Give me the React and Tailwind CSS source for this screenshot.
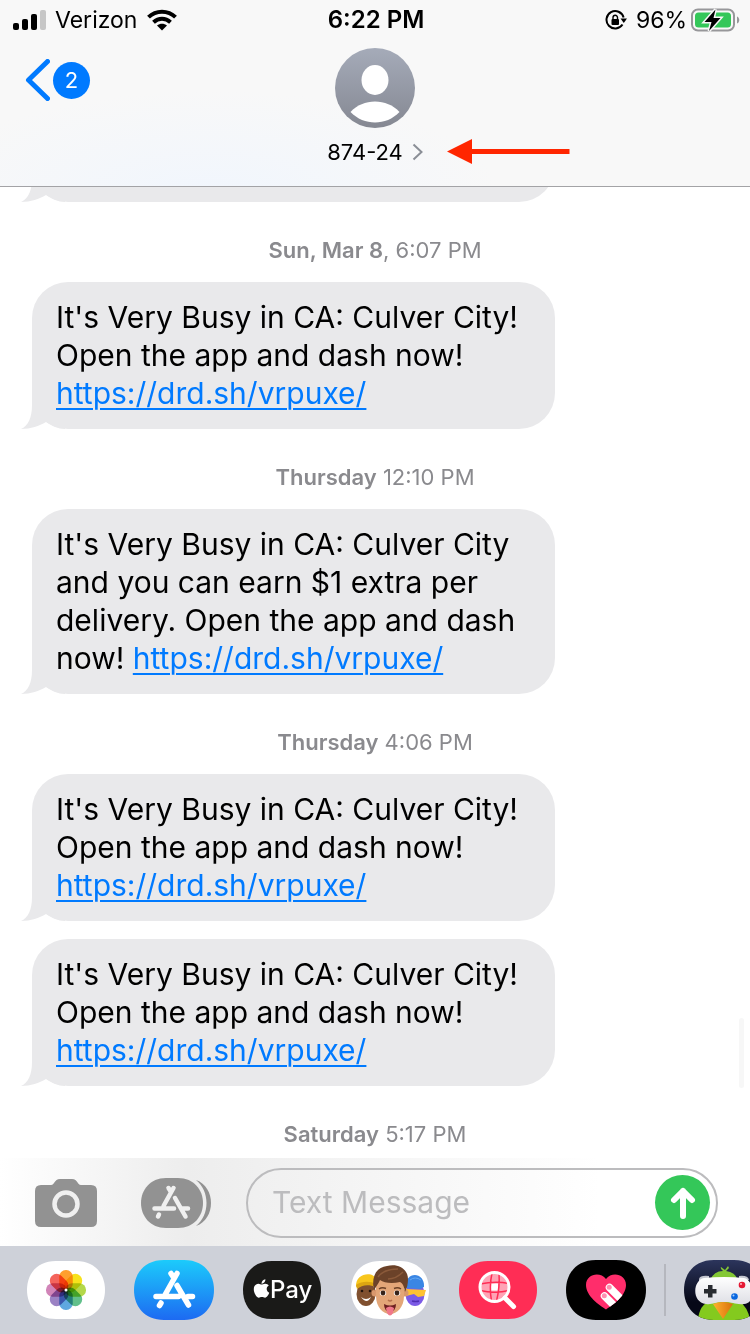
import { FaApple } from 'react-icons/fa';

const LINK = 'https://drd.sh/vrpuxe/';
const BUSY = "It's Very Busy in CA: Culver City! Open the app and dash now!";
const EXTRA =
  "It's Very Busy in CA: Culver City and you can earn $1 extra per delivery. Open the app and dash now!";

const thread = [
  { day: 'Sun, Mar 8', sep: ',', time: '6:07 PM', messages: [BUSY] },
  { day: 'Thursday', time: '12:10 PM', messages: [EXTRA] },
  { day: 'Thursday', time: '4:06 PM', messages: [BUSY, BUSY] },
];

const PILL = 'M30 0H50C70 0 80 14 80 30S70 60 50 60H30C10 60 0 46 0 30S10 0 30 0Z';
const PILL_INSET = 'M30 1H50C69 1 79 14 79 30S69 59 50 59H30C11 59 1 46 1 30S11 1 30 1Z';

function StatusBar() {
  return (
    <div className="grid h-10 grid-cols-3 items-center pl-3 pr-[10px] text-[23px]">
      <div className="flex items-center">
        <svg width="34" height="22" viewBox="0 0 34 22" aria-hidden="true">
          <rect x="1" y="14" width="6" height="7" rx="2" />
          <rect x="10" y="10" width="6" height="11" rx="2" />
          <rect x="19" y="5" width="6" height="16" rx="2" />
          <rect x="28" y="1" width="6" height="20" rx="2" fill="#c6c6c6" />
        </svg>
        <span className="mx-[9px]">Verizon</span>
        <svg width="32" height="24" viewBox="0 0 32 24" fill="none" stroke="#000" strokeWidth="4" aria-hidden="true">
          <path d="M2.500 9.200C10 1.800 22 1.800 29.500 9.200" />
          <path d="M7.500 14.300C12.500 9.700 19.500 9.700 24.500 14.300" />
          <path d="M11 17.500C14 15 18 15 21 17.500L16 22.500Z" fill="#000" stroke="none" />
        </svg>
      </div>
      <div className="text-center text-2xl font-semibold">6:22 PM</div>
      <div className="flex items-center justify-end">
        <svg width="22" height="22" viewBox="0 0 22 22" fill="none" aria-hidden="true">
          <path d="M17.500 15.500A8.700 8.700 0 1 1 18.600 8.500" stroke="#000" strokeWidth="2" />
          <path d="M15.500 9.500H22L18.800 14Z" fill="#000" />
          <rect x="6.500" y="10" width="7.500" height="6" rx="1" fill="#000" />
          <path d="M8 10.500V8.500A2.200 2.200 0 0 1 12.500 8.500V10.500" stroke="#000" strokeWidth="1.400" />
        </svg>
        <span className="ml-[9px] mr-1">96%</span>
        <svg width="49" height="24" viewBox="0 0 49 24" aria-hidden="true">
          <rect x="1" y="1.500" width="42" height="21" rx="6" fill="none" stroke="#97979a" strokeWidth="2" />
          <rect x="4" y="4.500" width="36" height="15" rx="3.500" fill="#34c759" />
          <path d="M46 8.500C49 9.500 49 14.500 46 15.500Z" fill="#97979a" />
          <path d="M24.500 1.500L13.500 14H20.500L18 23L29.500 10H22.500Z" stroke="#f8f8f8" strokeWidth="3" />
          <path d="M24.500 1.500L13.500 14H20.500L18 23L29.500 10H22.500Z" />
        </svg>
      </div>
    </div>
  );
}

function Header() {
  return (
    <header className="shrink-0 border-b border-[#a3a3a6] bg-[#f8f8f8] bg-[radial-gradient(ellipse_at_28%_105%,#f1f6fd_0%,#f8f8f8_38%)]">
      <StatusBar />
      <div className="grid grid-cols-3 items-start px-6 pb-5 pt-2">
        <button type="button" aria-label="Back" className="mt-3 flex h-10 items-center gap-[3px] justify-self-start">
          <svg width="26" height="42" viewBox="0 0 26 42" fill="none" aria-hidden="true">
            <path d="M23.500 2.500L4.500 21L23.500 39.500" stroke="#007aff" strokeWidth="5" strokeLinecap="round" strokeLinejoin="round" />
          </svg>
          <span className="flex size-[37px] items-center justify-center rounded-full bg-[#007aff] text-[22px] text-white">2</span>
        </button>
        <div className="flex flex-col items-center">
          <svg width="80" height="80" viewBox="0 0 80 80" aria-hidden="true">
            <defs>
              <linearGradient id="avatar" x2="0" y2="1">
                <stop stopColor="#a5abb9" />
                <stop offset="1" stopColor="#858892" />
              </linearGradient>
            </defs>
            <circle cx="40" cy="40" r="40" fill="url(#avatar)" />
            <ellipse cx="40" cy="32" rx="13.500" ry="15" fill="#fff" />
            <path d="M15.500 64C28 50 52 50 64.500 64C51 78 29 78 15.500 64Z" fill="#fff" />
          </svg>
          <div className="relative mt-[10px]">
            <button type="button" className="flex items-center gap-[9px] text-[22px] leading-7">
              874-24
              <svg width="11" height="18" viewBox="0 0 11 18" fill="none" aria-hidden="true">
                <path d="M1.500 1.500L9.500 9L1.500 16.500" stroke="#8a8e96" strokeWidth="2" />
              </svg>
            </button>
            <svg className="absolute left-full top-0 ml-6" width="123" height="28" viewBox="0 0 123 28" aria-hidden="true">
              <path d="M0 13.500L25 1V11H122.500V16H25V26Z" fill="#ff2600" />
            </svg>
          </div>
        </div>
      </div>
    </header>
  );
}

function Bubble({ text }) {
  return (
    <div className="relative w-[523px] max-w-full rounded-[36px] bg-[#e9e9eb] px-6 pb-[17px] pt-4 text-[30px] leading-[38px]">
      <svg className="absolute -left-[11px] bottom-0" width="44" height="36" viewBox="0 0 44 36" aria-hidden="true">
        <path d="M11 0V12C11 25 7 33 0 36C10 36 18 33 25 29C31 33 37 36 44 36V0Z" fill="#e9e9eb" />
      </svg>
      {text ? (
        <p className="relative">
          {text}{' '}
          <a href={LINK} className="text-[#007aff] underline decoration-2 underline-offset-4">{LINK}</a>
        </p>
      ) : (
        <div className="h-20" />
      )}
    </div>
  );
}

function Stamp({ day, sep, time }) {
  return (
    <div className="h-20 pt-[34px] text-center text-[22px] leading-7 text-[#8a8a8e]">
      <span className="font-semibold">{day}</span>
      {sep} {time}
    </div>
  );
}

function Composer() {
  return (
    <form
      onSubmit={(e) => e.preventDefault()}
      className="flex h-[88px] items-center bg-linear-to-r from-white via-[#ededed] via-25% to-white to-80% pl-[35px] pr-8 pt-px"
    >
      <button type="button" aria-label="Camera">
        <svg width="62" height="48" viewBox="0 0 62 48" aria-hidden="true">
          <path d="M6 6H16C20 6 19 0 25 0H37C43 0 42 6 46 6H56Q62 6 62 12V42Q62 48 56 48H6Q0 48 0 42V12Q0 6 6 6Z" fill="#929292" />
          <circle cx="31" cy="25" r="11.500" fill="none" stroke="#f0f0f0" strokeWidth="4.500" />
        </svg>
      </button>
      <button type="button" aria-label="Apps" className="ml-11">
        <svg width="70" height="50" viewBox="0 0 70 50" fill="none" aria-hidden="true">
          <path d="M25 0H37C53 0 62 12 62 25S53 50 37 50H25C9 50 0 38 0 25S9 0 25 0Z" fill="#929292" />
          <path d="M55 2C75 9 75 41 55 48C69 37 69 13 55 2Z" fill="#929292" />
          <path
            d="M32.500 10L22.500 28M27.500 10L30 14M34 20L44.500 38.500M13.500 30.500H33M41 30.500H47M18 36.500L17 38.500"
            stroke="#f0f0f0"
            strokeWidth="4.500"
            strokeLinecap="round"
          />
        </svg>
      </button>
      <div className="ml-[35px] flex h-[70px] min-w-0 flex-1 items-center rounded-full border-2 border-[#bcbcbe] pl-6 pr-[6px]">
        <input
          type="text"
          aria-label="Text Message"
          placeholder="Text Message"
          className="min-w-0 flex-1 bg-transparent text-[30px] outline-none placeholder:text-[#bcbcbe]"
        />
        <button type="submit" aria-label="Send" className="flex size-[55px] items-center justify-center rounded-full bg-[#34c759]">
          <svg width="28" height="34" viewBox="0 0 28 34" fill="none" stroke="#fff" strokeWidth="6" strokeLinecap="round" strokeLinejoin="round" aria-hidden="true">
            <path d="M14 30V5M5 14L14 5L23 14" />
          </svg>
        </button>
      </div>
    </form>
  );
}

function AppButton({ label, fill, shape = PILL, children }) {
  return (
    <button type="button" aria-label={label} className="shrink-0">
      <svg width="80" height="60" viewBox="0 0 80 60" aria-hidden="true">
        <path d={shape} fill={fill} />
        {children}
      </svg>
    </button>
  );
}

const petals = ['#ff9f2e', '#f7e21c', '#b4d84a', '#62c08b', '#5fa8e0', '#9b82c4', '#d184b8', '#f4645c'];

function AppStrip() {
  return (
    <nav className="flex h-[88px] items-center overflow-hidden bg-[#ced1d9] pl-[26px]">
      <div className="flex shrink-0 gap-7">
        <AppButton label="Photos" fill="#fff" shape={PILL_INSET}>
          {petals.map((color, i) => (
            <rect key={color} className="mix-blend-multiply" x="33.250" y="10" width="13.500" height="20.500" rx="6.500" fill={color} transform={`rotate(${i * 45} 40 30)`} />
          ))}
          <circle cx="40" cy="30" r="1.500" fill="#fff" />
        </AppButton>

        <AppButton label="App Store" fill="url(#store)">
          <defs>
            <linearGradient id="store" x2="0" y2="1">
              <stop stopColor="#1ccbfb" />
              <stop offset="1" stopColor="#1d6af2" />
            </linearGradient>
          </defs>
          <path
            d="M43 13.500L31.500 34M37 13.500L40 18M43 25.500L54.500 45M22 36.500H44.500M54 36.500H58.500M27 43L25.500 45.500"
            stroke="#fff"
            strokeWidth="5.500"
            strokeLinecap="round"
          />
        </AppButton>

        <AppButton label="Apple Pay" fill="#1a1a18" shape={PILL_INSET}>
          <FaApple x="9" y="18" size={21} color="#fff" />
          <text x="28" y="38" fontSize="24" fontWeight="500" fill="#fff">Pay</text>
        </AppButton>

        <AppButton label="Memoji" fill="#fff" shape={PILL_INSET}>
          {/* left: yellow beanie */}
          <ellipse cx="16" cy="34" rx="9.500" ry="12" fill="#80502f" />
          <path d="M6 27C5 12 25 11 26 20V26C17 23 11 24 6 27Z" fill="#f8c61d" />
          <path d="M6 25C12 21 20 21 26 24V27C18 24 12 25 7 29Z" fill="#dca512" />
          <circle cx="12" cy="31" r="1.300" fill="#23150d" />
          <circle cx="20" cy="31" r="1.300" fill="#23150d" />
          <path d="M11 37Q16 41 21 37Q17 45 11 37Z" fill="#fff" />
          {/* right: purple with goggles */}
          <ellipse cx="65" cy="34" rx="9.500" ry="12" fill="#7c5be6" />
          <path d="M56 28C54 11 75 11 74 27L70 29Z" fill="#3a86e4" />
          <path d="M60 20Q65 16 71 20" stroke="#65aaf3" fill="none" />
          <path d="M56 29L76 30L74 36L68 37L64 34L56 36Z" fill="#ffc232" />
          <path d="M62 41Q66 42 69 41" stroke="#4f2fb4" strokeWidth="1.500" fill="none" />
          {/* centre face */}
          <circle cx="25" cy="33" r="3.500" fill="#d9986d" />
          <circle cx="55" cy="33" r="3.500" fill="#d9986d" />
          <path d="M26 20H54V36C54 47 47 54 40 54S26 47 26 36Z" fill="#e3a678" />
          <path d="M24 31C21 17 26 7 37 6C48 3 58 9 58 19C58 24 57 28 55 32C54 25 52 23 50 22C42 24 34 23 30 20C29 23 26 26 24 31Z" fill="#6b4229" />
          <path d="M28 17C33 10 42 9 48 9M38 19C45 19 50 15 53 12" stroke="#8b5a3a" strokeWidth="1.500" fill="none" />
          <path d="M29 29Q32 27 36 28.500M44 28.500Q48 27 51 29" stroke="#6b4026" strokeWidth="1.500" fill="none" />
          <ellipse cx="33" cy="33" rx="3.200" ry="2.600" fill="#fff" />
          <ellipse cx="47" cy="33" rx="3.200" ry="2.600" fill="#fff" />
          <circle cx="33" cy="33" r="2.400" fill="#352319" />
          <circle cx="47" cy="33" r="2.400" fill="#352319" />
          <path d="M38 40Q40 42 42 40" stroke="#b6704b" strokeWidth="1.500" fill="none" />
          <path d="M34 44Q40 47 46 44Q46 51 40 52Q34 51 34 44Z" fill="#6d2020" />
          <path d="M36 48Q40 45 44 48L43 53Q40 58 37 53Z" fill="#f0788a" />
        </AppButton>

        <AppButton label="Images" fill="#ff2d55" shape={PILL_INSET}>
          <circle cx="36.500" cy="27" r="14" fill="#ffa3b5" />
          <path d="M33 23.500H40V30.500H33Z" fill="#fff" />
          <path d="M22 24Q37 21 51 23.500M22 30.500Q37 34 51 30.500M34 13Q31 27 33.500 41M41 13Q42 27 38.500 41" stroke="#ff2d55" strokeWidth="1.500" fill="none" />
          <circle cx="36.500" cy="27" r="14.500" stroke="#fff" strokeWidth="3" fill="none" />
          <path d="M47 38L55.500 46.500" stroke="#fff" strokeWidth="5" strokeLinecap="round" />
        </AppButton>

        <AppButton label="Digital Touch" fill="#000">
          <defs>
            <clipPath id="heart">
              <path d="M40 49.500C33 45 20 36 20 25C20 14 34 11 40 19C46 11 60 14 60 25C60 36 47 45 40 49.500Z" />
            </clipPath>
          </defs>
          <g clipPath="url(#heart)">
            <rect width="80" height="60" fill="#ff2d6b" />
            <g stroke="#fff" strokeWidth="7.500" strokeLinecap="round">
              <path d="M43.500 27.500L60 44M38.500 36L54 51.500" />
            </g>
            <circle cx="43.200" cy="27.200" r="2.500" fill="#ff8fb1" />
            <circle cx="38.300" cy="35.800" r="2.500" fill="#ff8fb1" />
          </g>
        </AppButton>
      </div>

      <div className="mx-[18px] h-[52px] w-0.5 shrink-0 bg-[#b5b7be]" />

      <AppButton label="GamePigeon" fill="url(#night)">
        <defs>
          <linearGradient id="night" x2="0" y2="1">
            <stop stopColor="#2c355c" />
            <stop offset="0.700" stopColor="#060817" />
          </linearGradient>
          <linearGradient id="pad" x2="0" y2="1">
            <stop stopColor="#fff" />
            <stop offset="1" stopColor="#dedfe5" />
          </linearGradient>
          <linearGradient id="beak">
            <stop stopColor="#ffb22e" />
            <stop offset="1" stopColor="#d9700b" />
          </linearGradient>
          <clipPath id="pigeon">
            <path d={PILL} />
          </clipPath>
        </defs>
        <g clipPath="url(#pigeon)">
          <path d="M14 60Q15 45 27 40H54Q64 47 66 60Z" fill="#84ca1e" />
          <path d="M26 20Q30 11 39 11Q36 8 37 7L41 10L44 6L45 8L42 11Q51 12 54 20Z" fill="#84c835" />
          <path d="M15 19Q16 15 25 16V21H15ZM55 16Q64 15 65 20H55Z" fill="#c2c4ce" />
          <path d="M20 18Q40 16 60 18C70 20 73 43 60 44C52 45 49 42 40 42S28 45 22 44C7 42 9 20 20 18Z" fill="url(#pad)" />
          <path d="M24 25H28.500V29H32.500V33.500H28.500V37.500H24V33.500H20V29H24Z" fill="#292c31" />
          <circle cx="58" cy="25" r="3.300" fill="#e51a35" />
          <circle cx="57" cy="24" r="1" fill="#ffb5bf" />
          <circle cx="50.500" cy="36.500" r="3.300" fill="#0967df" />
          <circle cx="49.500" cy="35.500" r="1" fill="#a7d0ff" />
          <path d="M29 44Q39 40 49 44Q45 50 39 59Q33 50 29 44Z" fill="url(#beak)" />
        </g>
      </AppButton>
    </nav>
  );
}

export default function App() {
  return (
    <div className="flex h-screen flex-col overflow-hidden bg-white font-['Inter','Liberation_Sans',sans-serif] text-black">
      <Header />

      <main className="relative flex min-h-0 flex-1 flex-col justify-end overflow-hidden">
        <div className="shrink-0 px-8">
          <Bubble />
        </div>
        {thread.map((group) => (
          <section key={group.day + group.time} className="shrink-0">
            <Stamp day={group.day} sep={group.sep} time={group.time} />
            <div className="flex flex-col gap-[18px] px-8">
              {group.messages.map((text, i) => (
                <Bubble key={i} text={text} />
              ))}
            </div>
          </section>
        ))}
        <div className="-mb-2 shrink-0">
          <Stamp day="Saturday" time="5:17 PM" />
        </div>
        <div className="absolute bottom-[70px] right-[6px] h-[70px] w-[5px] rounded-full bg-[#f7f7f7]" />
      </main>

      <footer className="shrink-0">
        <Composer />
        <AppStrip />
      </footer>
    </div>
  );
}
